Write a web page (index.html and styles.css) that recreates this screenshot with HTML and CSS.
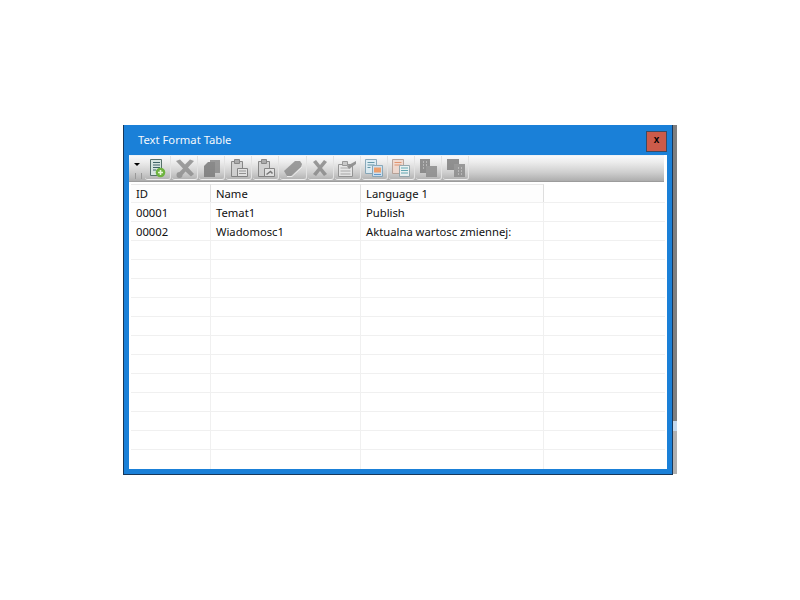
FILE: index.html
```html
<!DOCTYPE html>
<html lang="en">
<head>
<meta charset="utf-8">
<title>Text Format Table</title>
<link rel="stylesheet" href="styles.css">
</head>
<body>
<div class="stage">
  <div class="window">
    <div class="titlebar">
      <span class="title">Text Format Table</span>
      <button class="close">x</button>
    </div>
    <div class="content">
      <div class="toolbar">
        <div class="grip"><span class="arrow"></span><span class="bars"></span></div>
        <div class="tools">
          <span class="tool"><svg viewBox="0 0 20 20"><path d="M2.500 1.500h11v16h-11z" fill="#d7e4e0" stroke="#55706a"/><path d="M5 4.500h7M5 7h7M5 9.500h7M5 12h3" stroke="#3f6468"/><circle cx="12.500" cy="14.500" r="4.800" fill="#6db33f"/><path d="M12.500 12v5M10 14.500h5" stroke="#e9f6d8" stroke-width="1.600"/></svg></span>
          <span class="tool muted"><svg viewBox="0 0 20 20"><path d="M1 3l4-1.500 5 5 5-5L19 3l-6 6.500L19 16l-3 2.500-5.500-5-3 3.500a3 3 0 1 1-3-3l3.500-3.500z" fill="#8f8f8f"/></svg></span>
          <span class="tool muted"><svg viewBox="0 0 20 20"><path d="M8 2h10v13H8z" fill="#8a8a8a"/><path d="M2 8l4-4h7v15H2z" fill="#7a7a7a"/></svg></span>
          <span class="tool muted"><svg viewBox="0 0 20 20"><path d="M2.500 3.500h11v15h-11z" fill="#cfcfcf" stroke="#777"/><path d="M5.500 1.500h5v4h-5z" fill="#a0a0a0" stroke="#777"/><path d="M8.500 10.500h10v8h-10z" fill="#e4e4e4" stroke="#777"/><path d="M10 13h7M10 15.500h7" stroke="#888"/></svg></span>
          <span class="tool muted"><svg viewBox="0 0 20 20"><path d="M2.500 3.500h11v15h-11z" fill="#cfcfcf" stroke="#777"/><path d="M5.500 1.500h5v4h-5z" fill="#a0a0a0" stroke="#777"/><path d="M8.500 10.500h10v8h-10z" fill="#e4e4e4" stroke="#777"/><path d="M10.500 16.500l4-3 2 2" fill="none" stroke="#666" stroke-width="1.500"/></svg></span>
          <span class="tool muted"><svg viewBox="0 0 20 20"><path d="M1 13L12 3h5l2 3-1 3-10 9H4z" fill="#8e8e8e"/><path d="M4 18.500h5l10-9.500" fill="none" stroke="#f2f2f2"/></svg></span>
          <span class="tool muted"><svg viewBox="0 0 20 20"><path d="M3 4l3-2 4 5 4-5 3 2-5 6 5 6-3 2-4-5-4 5-3-2 5-6z" fill="#8a8a8a"/></svg></span>
          <span class="tool muted"><svg viewBox="0 0 20 20"><path d="M1.500 6.500h14v12h-14z" fill="#e8e8e8" stroke="#8a8a8a"/><path d="M3.500 10h10M3.500 13h10M3.500 16h10" stroke="#a0a0a0"/><path d="M5.500 3.500h5v4h-5z" fill="#c4c4c4" stroke="#8a8a8a"/><path d="M10 8l9-5v3l-7 5z" fill="#858585"/></svg></span>
          <span class="tool soft"><svg viewBox="0 0 20 20"><path d="M1.500 1.500h11v14h-11z" fill="#dcedf5" stroke="#7a9fb3"/><path d="M3.500 4.500h7M3.500 7h7M3.500 9.500h3" stroke="#4f8a9d"/><path d="M8.500 7.500h10v11h-10z" fill="#cde4f5" stroke="#7a9fb3"/><path d="M10 9.500h7v5h-7z" fill="#f0955a"/><path d="M10 16.500h7" stroke="#4f8fd0"/></svg></span>
          <span class="tool soft"><svg viewBox="0 0 20 20"><path d="M1.500 1.500h11v14h-11z" fill="#f1d8cd" stroke="#b29a8f"/><path d="M3.500 4.500h7M3.500 7h7" stroke="#e0855a"/><path d="M8.500 7.500h10v11h-10z" fill="#eef6f6" stroke="#8aa0a8"/><path d="M10 10h7M10 12.500h7M10 15h7" stroke="#4fa0ad"/></svg></span>
          <span class="tool muted"><svg viewBox="0 0 20 20"><path d="M2 1h10v14H2z" fill="#808080"/><path d="M8 8h11v11H8z" fill="#8c8c8c"/><path d="M5 4h1M8 4h1M5 7h1M8 7h1M5 10h1" stroke="#ddd"/></svg></span>
          <span class="tool muted"><svg viewBox="0 0 20 20"><path d="M1 1h12v11H1z" fill="#808080"/><path d="M8 6h11v13H8z" fill="#8c8c8c"/><path d="M12 10h1M15 10h1M12 13h1M15 13h1M12 16h1M15 16h1" stroke="#ddd"/></svg></span>
        </div>
      </div>
      <div class="grid">
        <div class="row head"><div class="cell">ID</div><div class="cell">Name</div><div class="cell">Language 1</div><div class="cell filler"></div></div>
        <div class="row"><div class="cell">00001</div><div class="cell">Temat1</div><div class="cell">Publish</div><div class="cell"></div></div>
        <div class="row"><div class="cell">00002</div><div class="cell">Wiadomosc1</div><div class="cell">Aktualna wartosc zmiennej:</div><div class="cell"></div></div>
        <div class="row"><div class="cell"></div><div class="cell"></div><div class="cell"></div><div class="cell"></div></div>
        <div class="row"><div class="cell"></div><div class="cell"></div><div class="cell"></div><div class="cell"></div></div>
        <div class="row"><div class="cell"></div><div class="cell"></div><div class="cell"></div><div class="cell"></div></div>
        <div class="row"><div class="cell"></div><div class="cell"></div><div class="cell"></div><div class="cell"></div></div>
        <div class="row"><div class="cell"></div><div class="cell"></div><div class="cell"></div><div class="cell"></div></div>
        <div class="row"><div class="cell"></div><div class="cell"></div><div class="cell"></div><div class="cell"></div></div>
        <div class="row"><div class="cell"></div><div class="cell"></div><div class="cell"></div><div class="cell"></div></div>
        <div class="row"><div class="cell"></div><div class="cell"></div><div class="cell"></div><div class="cell"></div></div>
        <div class="row"><div class="cell"></div><div class="cell"></div><div class="cell"></div><div class="cell"></div></div>
        <div class="row"><div class="cell"></div><div class="cell"></div><div class="cell"></div><div class="cell"></div></div>
        <div class="row"><div class="cell"></div><div class="cell"></div><div class="cell"></div><div class="cell"></div></div>
        <div class="row last"><div class="cell"></div><div class="cell"></div><div class="cell"></div><div class="cell"></div></div>
      </div>
    </div>
  </div>
  <div class="edge"><span class="edge-dark"></span><span class="edge-light"></span><span class="edge-grey"></span></div>
</div>
</body>
</html>
```

FILE: styles.css
```css
* { box-sizing: border-box; }
html, body { margin: 0; background: #fff; }
body { height: 600px; overflow: hidden; font-family: "Noto Sans", Arial, sans-serif; }
.stage { display: flex; padding: 125px 0 0 123px; height: 475px; }
.window { width: 550px; height: 350px; background: #1a80d8; border: 1px solid #17375a; border-top: 0; padding: 0 5px 5px 5px; display: flex; flex-direction: column; }
.titlebar { height: 30px; flex: none; display: flex; align-items: center; justify-content: space-between; padding: 0 0 0 9px; }
.title { color: #f4f8fc; font: 11.250px "Noto Sans", sans-serif; position: relative; top: -1px; }
.close { width: 21px; height: 21px; margin: 2px 0 0 0; padding: 0 0 2px; border: 1px solid #3b4a63; background: #cb5b4a; color: #000; font: bold 10px "Liberation Sans", sans-serif; line-height: 14px; }
.content { flex: 1; background: #fff; min-height: 0; overflow: hidden; }
.toolbar { height: 27px; margin: 0 3px 1px 0; display: flex; align-items: stretch; background: linear-gradient(#f8f9fb 0, #ececec 25%, #cfcfcf 65%, #adadad 100%); border-bottom: 1px solid #9c9c9c; border-top: 1px solid #eef2f6; }
.grip { width: 16px; position: relative; flex: none; }
.arrow { position: absolute; left: 5px; top: 7px; border: 3px solid transparent; border-top: 3px solid #000; border-bottom: 0; }
.bars { position: absolute; left: 6px; top: 17px; width: 7px; height: 6px; border-left: 1px solid #9a9a9a; border-right: 1px solid #9a9a9a; }
.tools { display: flex; gap: 1px; }
.tool { width: 26.100px; height: 24px; border-right: 1px solid #e2e2e2; border-bottom: 1px solid #efefef; border-radius: 0 0 3px 3px; display: flex; align-items: center; justify-content: center; }
.tool svg { width: 20px; height: 20px; display: block; }
.tool.muted svg { opacity: .85; }
.tool.soft svg { opacity: .85; }
.grid { display: flex; flex-direction: column; padding: 1px 0 0 2px; font: 11.250px/19px "Noto Sans", sans-serif; color: #111; }
.row { display: grid; grid-template-columns: 80px 150px 183px 1fr; height: 19px; border-bottom: 1px solid #f0f0f0; margin-right: 2px; }
.row.last { border-bottom: 0; }
.cell { padding-left: 5px; border-right: 1px solid #f0f0f0; line-height: 20px; white-space: nowrap; overflow: hidden; }
.cell:last-child { border-right: 0; }
.head .cell { border-right-color: #dedede; border-top: 1px solid #e9e9e9; line-height: 17px; background: #fdfdfd; }
.head .filler { background: #fff; border-top: 0; }
.edge { width: 4px; height: 349px; display: flex; flex-direction: column; }
.edge-dark { height: 296px; background: #7f7f7f; }
.edge-light { height: 10px; background: #c4d8ec; }
.edge-grey { flex: 1; background: #b0b0b0; }
```
